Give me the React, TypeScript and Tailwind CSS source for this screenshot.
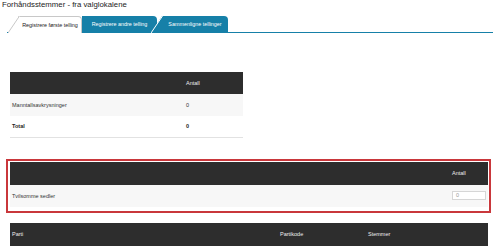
import React from "react";

const BLUE = "#1680a8";

function Tab({
  label,
  active,
  width,
  slant,
  z,
  ml,
}: {
  label: string;
  active?: boolean;
  width: number;
  slant: boolean;
  z: string;
  ml: string;
}) {
  return (
    <div
      className={`relative ${z} ${ml} -mb-px flex h-[17px] items-center justify-center rounded-tr-[4px] text-[5.4px] ${
        active
          ? "border border-b-0 border-[#c8c8c8] bg-white text-[#222]"
          : "bg-[#1680a8] text-white"
      }`}
      style={{ width }}
    >
      {slant && (
        <svg
          className="absolute bottom-0 left-[-11px] h-[17px] w-[12px]"
          viewBox="0 0 12 17"
          preserveAspectRatio="none"
        >
          <polygon points="0,17 11,0 12,0 12,17" fill={active ? "#fff" : BLUE} />
          <line
            x1="0"
            y1="17"
            x2="11.5"
            y2="0"
            stroke={active ? "#c8c8c8" : "#fff"}
            strokeWidth="1"
          />
        </svg>
      )}
      <span className="relative">{label}</span>
    </div>
  );
}

export default function App() {
  return (
    <main className="h-[249px] w-[500px] overflow-hidden bg-white font-['Liberation_Sans',Arial,sans-serif] text-[#333]">
      {/* Title */}
      <h1 className="pl-[2px] text-[7.8px] leading-[10px] text-[#222]">
        Forhåndsstemmer - fra valglokalene
      </h1>

      {/* Tabs */}
      <div className="mt-[6px] ml-[7px] flex w-[486px] items-end border-b border-[#1680a8] pl-[11px]">
        <Tab label="Registrere første telling" active width={64} slant z="z-30" ml="" />
        <Tab label="Registrere andre telling" width={75} slant={false} z="z-10" ml="" />
        <Tab label="Sammenligne tellinger" width={66} slant z="z-20" ml="ml-[5px]" />
      </div>

      {/* Manntall table */}
      <div className="mt-[39px] ml-[10px] w-[233px] text-[5.5px]">
        <div className="flex h-[22px] items-center bg-[#2d2d2d] text-[#eee]">
          <div className="w-[176px] pl-[2px]"></div>
          <div>Antall</div>
        </div>
        <div className="flex h-[22px] items-center bg-[#f7f7f7]">
          <div className="w-[176px] pl-[2px]">Manntallsavkrysninger</div>
          <div>0</div>
        </div>
        <div className="flex h-[22px] items-center border-b border-[#e2e2e2] font-bold text-[#222]">
          <div className="w-[176px] pl-[2px]">Total</div>
          <div>0</div>
        </div>
      </div>

      {/* Tvilsomme sedler */}
      <div className="mt-[21px] ml-[6px] w-[485px] border-2 border-[#c9373b] pt-[1px] pr-[1px] pb-[4px] pl-[2px] text-[5.5px]">
        <div className="flex h-[23px] items-center bg-[#2d2d2d] text-[#eee]">
          <div className="w-[442px]"></div>
          <div>Antall</div>
        </div>
        <div className="flex h-[22px] items-center bg-[#f7f7f7]">
          <div className="w-[442px] pl-[2px]">Tvilsomme sedler</div>
          <div className="mt-[-1px] flex h-[9px] w-[34px] items-center border border-[#d6d6d6] bg-white pl-[3px] text-[#999]">
            0
          </div>
        </div>
      </div>

      {/* Parti table */}
      <div className="mt-[10px] ml-[10px] w-[478px] text-[5.5px]">
        <div className="flex h-[23px] items-center bg-[#2d2d2d] text-[#eee]">
          <div className="w-[270px] pl-[2px]">Parti</div>
          <div className="w-[88px]">Partikode</div>
          <div>Stemmer</div>
        </div>
      </div>
    </main>
  );
}
